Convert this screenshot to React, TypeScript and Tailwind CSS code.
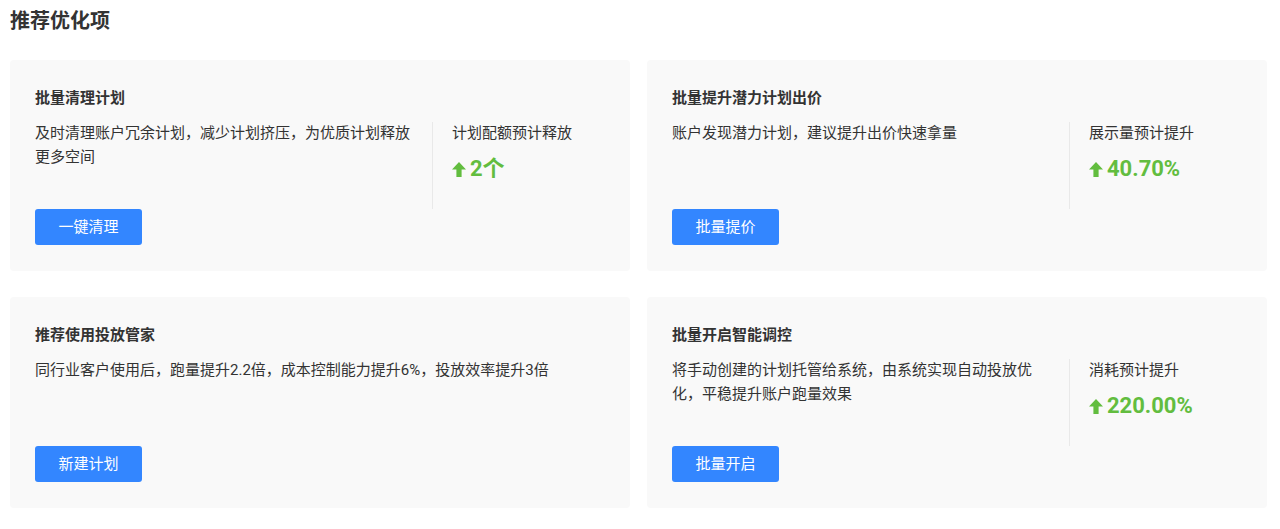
import type { ReactNode } from "react";

type CardData = {
  title: string;
  desc: ReactNode;
  label?: string;
  value?: string;
  action: string;
};

const cards: CardData[] = [
  {
    title: "批量清理计划",
    desc: "及时清理账户冗余计划，减少计划挤压，为优质计划释放更多空间",
    label: "计划配额预计释放",
    value: "2个",
    action: "一键清理",
  },
  {
    title: "批量提升潜力计划出价",
    desc: "账户发现潜力计划，建议提升出价快速拿量",
    label: "展示量预计提升",
    value: "40.70%",
    action: "批量提价",
  },
  {
    title: "推荐使用投放管家",
    desc: "同行业客户使用后，跑量提升2.2倍，成本控制能力提升6%，投放效率提升3倍",
    action: "新建计划",
  },
  {
    title: "批量开启智能调控",
    desc: (
      <>
        将手动创建的计划托管给系统，由系统实现自动投放优
        <span className="inline-block">化，</span>平稳提升账户跑量效果
      </>
    ),
    label: "消耗预计提升",
    value: "220.00%",
    action: "批量开启",
  },
];

function UpArrow() {
  return (
    <svg width="14" height="15" viewBox="0 0 14 15" className="mr-[4px] shrink-0">
      <path d="M7 0L14 7.5H9.6V15H4.4V7.5H0Z" fill="#62bd3f" />
    </svg>
  );
}

function Card({ title, desc, label, value, action }: CardData) {
  return (
    <div className="flex h-[211px] flex-col rounded-[4px] bg-[#f9f9f9] px-[25px] pt-[26px] pb-[26px]">
      <div className="text-[15px] leading-[24px] font-bold text-[#333]">{title}</div>
      <div className="mt-[11px] flex flex-1">
        <div className="flex flex-1 flex-col pr-[20px]">
          <p className="text-[15px] leading-[24px] text-[#333]">{desc}</p>
          <button className="mt-auto h-[36px] w-[107px] rounded-[3px] bg-[#3386ff] text-[15px] text-white">
            {action}
          </button>
        </div>
        {label && (
          <div className="mt-[1px] h-[87px] w-[173px] border-l border-[#e9e9e9] pl-[19px]">
            <div className="text-[15px] leading-[22px] text-[#333]">{label}</div>
            <div className="mt-[10px] flex items-center text-[22px] leading-[30px] font-bold text-[#62bd3f]">
              <UpArrow />
              <span>{value}</span>
            </div>
          </div>
        )}
      </div>
    </div>
  );
}

export default function App() {
  return (
    <div
      className="min-h-[529px] bg-white pl-[10px] pt-[7px]"
      style={{ fontFamily: 'Roboto, "Noto Sans CJK SC", sans-serif' }}
    >
      <h1 className="text-[20px] leading-[28px] font-bold text-[#333]">推荐优化项</h1>
      <div className="mt-[25px] grid grid-cols-[620px_620px] gap-x-[17px] gap-y-[26px]">
        {cards.map((c) => (
          <Card key={c.title} {...c} />
        ))}
      </div>
    </div>
  );
}
